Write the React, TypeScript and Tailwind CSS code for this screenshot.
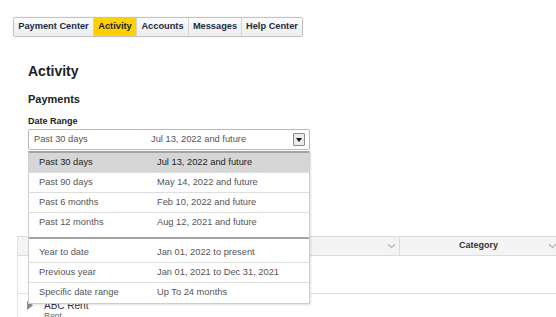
import React from "react";

const tabs = [
  { label: "Payment Center", w: "w-[79px]", active: false },
  { label: "Activity", w: "w-[43px]", active: true },
  { label: "Accounts", w: "w-[52px]", active: false },
  { label: "Messages", w: "w-[53px]", active: false },
  { label: "Help Center", w: "w-[61px]", active: false },
];

const group1 = [
  ["Past 30 days", "Jul 13, 2022 and future"],
  ["Past 90 days", "May 14, 2022 and future"],
  ["Past 6 months", "Feb 10, 2022 and future"],
  ["Past 12 months", "Aug 12, 2021 and future"],
];

const group2 = [
  ["Year to date", "Jan 01, 2022 to present"],
  ["Previous year", "Jan 01, 2021 to Dec 31, 2021"],
  ["Specific date range", "Up To 24 months"],
];

function Chevron() {
  return (
    <svg width="9" height="6" viewBox="0 0 9 6" className="shrink-0">
      <path d="M1 1.2 L4.5 4.5 L8 1.2" fill="none" stroke="#b5b5b5" strokeWidth="1.2" />
    </svg>
  );
}

export default function App() {
  return (
    <div className="relative w-[556px] h-[317px] overflow-hidden bg-white font-['Liberation_Sans',Arial,sans-serif]">
      {/* Tabs */}
      <div className="pt-[17px] pl-[13px]">
        <div className="flex w-fit h-[20px] border border-[#c4c4c4] rounded-[2px] shadow-[0_0_2px_rgba(0,0,0,0.12)] overflow-hidden">
          {tabs.map((t, i) => (
            <div
              key={t.label}
              className={`${t.w} flex items-center justify-center text-[9.25px] font-bold ${
                i > 0 ? "border-l border-[#d2d2d2]" : ""
              } ${
                t.active
                  ? "bg-[#ffd100] text-[#222222]"
                  : "bg-gradient-to-b from-[#fbfbfb] to-[#ececec] text-[#1d2c44]"
              }`}
            >
              {t.label}
            </div>
          ))}
        </div>
      </div>

      <div className="pl-[28px]">
        <h1 className="mt-[26px] text-[14px] leading-[17px] font-bold text-[#222222]">Activity</h1>
        <h2 className="mt-[13px] text-[11px] leading-[13px] font-bold text-[#222222]">Payments</h2>
        <div className="mt-[10px] text-[9px] leading-[11px] font-bold text-[#222222]">Date Range</div>

        {/* Select with open menu */}
        <div className="relative mt-[2px] w-[282px] z-10">
          <div className="h-[21px] flex items-center border border-[#b9b9b9] rounded-[2px] bg-white pl-[5px] pr-[4px] text-[9.3px] text-[#555555]">
            <span className="w-[117px]">Past 30 days</span>
            <span className="flex-1">Jul 13, 2022 and future</span>
            <div className="w-[12px] h-[13px] flex items-center justify-center border border-[#8a8a8a] rounded-[1px] bg-[#ebebeb]">
              <svg width="6" height="4" viewBox="0 0 6 4">
                <path d="M0 0 H6 L3 4 Z" fill="#111111" />
              </svg>
            </div>
          </div>

          <div className="absolute left-0 top-[22px] w-full bg-white border-x border-b border-[#cfcfcf] border-t-2 border-t-[#a3a3a3] shadow-[1px_1px_2px_rgba(0,0,0,0.12)] text-[9.3px] text-[#555555]">
            <div className="pb-[4px]">
              {group1.map(([a, b], i) => (
                <div
                  key={a}
                  className={`h-[20px] flex items-center pl-[10px] ${
                    i === 0 ? "bg-[#d6d6d6] text-[#222222]" : ""
                  } ${i < 3 ? "border-b border-[#dedede]" : ""}`}
                >
                  <span className="w-[118px]">{a}</span>
                  <span>{b}</span>
                </div>
              ))}
            </div>
            <div className="border-t-2 border-[#a3a3a3] pt-[4px]">
              {group2.map(([a, b], i) => (
                <div
                  key={a}
                  className={`h-[20px] flex items-center pl-[10px] ${
                    i < 2 ? "border-b border-[#dedede]" : ""
                  }`}
                >
                  <span className="w-[118px]">{a}</span>
                  <span>{b}</span>
                </div>
              ))}
            </div>
          </div>
        </div>
      </div>

      {/* Table behind menu */}
      <div className="ml-[17px] mt-[86px] w-[560px] border-l border-[#e2e2e2]">
        <div className="h-[20px] flex bg-[#f4f4f4] border-y border-[#dcdcdc]">
          <div className="w-[382px] flex items-center justify-end pr-[3px] border-r border-[#dcdcdc]">
            <Chevron />
          </div>
          <div className="w-[157px] relative flex items-center justify-center text-[9px] font-bold text-[#333333]">
            Category
            <div className="absolute right-[0px] top-[6px]">
              <Chevron />
            </div>
          </div>
        </div>
        <div className="h-[38px] border-b border-[#e2e2e2] pt-[5px] pl-[10px]">
          <div className="w-[10px] h-[10px] border border-[#8c8c8c] bg-white" />
        </div>
        <div className="flex pl-[9px] pt-[6px]">
          <svg width="6" height="9" viewBox="0 0 6 9" className="mt-[1px]">
            <path d="M0 0 L6 4.5 L0 9 Z" fill="#8a8a8a" />
          </svg>
          <div className="ml-[11px]">
            <div className="text-[10px] leading-[11px] text-[#333333]">ABC Rent</div>
            <div className="text-[8.5px] leading-[10px] text-[#666666]">Rent</div>
          </div>
        </div>
      </div>
    </div>
  );
}
